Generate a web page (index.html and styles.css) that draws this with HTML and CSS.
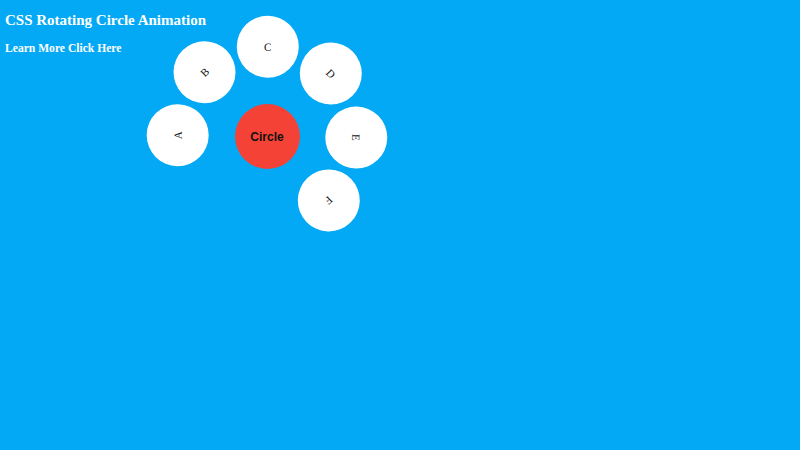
FILE: index.html
```html
<!DOCTYPE html>
<html>
<head>
<meta charset="utf-8">
<link rel="stylesheet" href="styles.css">
</head>
<body>
<div class="header">
  <h2 class="title">CSS Rotating Circle Animation</h2>
  <h3 class="link">Learn More Click Here</h3>
</div>
<div class="stage">
  <div class="node" style="--a:-89.5deg"><span>A</span></div>
  <div class="node" style="--a:-44.4deg"><span>B</span></div>
  <div class="node" style="--a:0.5deg"><span>C</span></div>
  <div class="node" style="--a:45.6deg"><span>D</span></div>
  <div class="node" style="--a:91deg"><span>E</span></div>
  <div class="node" style="--a:136.2deg"><span>F</span></div>
  <div class="center">Circle</div>
</div>
</body>
</html>
```
FILE: styles.css
```css
html, body {
  margin: 0;
  padding: 0;
  background: #03a9f4;
  height: 100%;
  overflow: hidden;
}
.header {
  padding: 11px 5px 0;
  font-family: "Liberation Serif", "Times New Roman", serif;
  color: #fff;
}
.title {
  margin: 0;
  font-size: 15px;
  line-height: 18px;
  font-weight: bold;
}
.link {
  margin: 12px 0 0;
  font-size: 11.6px;
  line-height: 15px;
  font-weight: bold;
}
.stage {
  position: absolute;
  left: 167px;
  top: 36px;
  width: 200px;
  height: 200px;
}
.node {
  position: absolute;
  left: 69px;
  top: 69px;
  width: 62px;
  height: 62px;
  border-radius: 50%;
  background: #fff;
  display: flex;
  align-items: center;
  justify-content: center;
  transform: rotate(var(--a)) translateY(-89.3px);
  font-family: "Liberation Serif", "Times New Roman", serif;
  font-size: 11px;
  color: #111;
}
.center {
  position: absolute;
  left: 67.5px;
  top: 68px;
  width: 65px;
  height: 65px;
  border-radius: 50%;
  background: #f44336;
  display: flex;
  align-items: center;
  justify-content: center;
  font-family: "Liberation Sans", Arial, sans-serif;
  font-weight: bold;
  font-size: 12px;
  color: #111;
}
```
